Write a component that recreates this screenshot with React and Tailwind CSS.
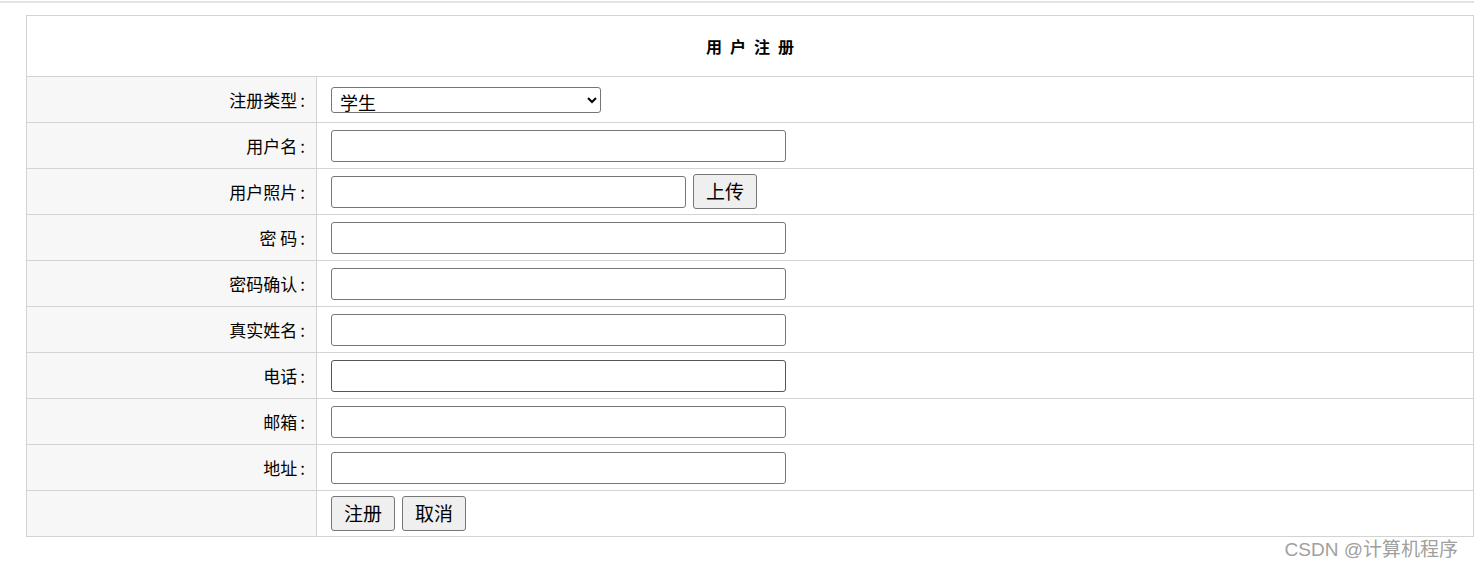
import { useState } from 'react';

const fields = [
  { label: '用户名', name: 'username' },
  { label: '用户照片', name: 'photo', upload: true },
  { label: '密 码', name: 'password', type: 'password' },
  { label: '密码确认', name: 'password2', type: 'password' },
  { label: '真实姓名', name: 'realname' },
  { label: '电话', name: 'phone', dark: true },
  { label: '邮箱', name: 'email' },
  { label: '地址', name: 'address' }
];

const font = { fontFamily: '"Noto Sans CJK SC", "Noto Sans", sans-serif' };

const Label = ({ text, top }) => (
  <div className={`flex items-center justify-end bg-[#f7f7f7] border-r ${top ? 'border-t' : ''} border-[#d3d3d3] pr-[11px] text-[17px] text-black`}>
    {text}
    <span className="ml-[3px]">:</span>
  </div>
);

const App = () => {
  const [type, setType] = useState('学生');

  return (
    <div className="relative w-[1474px] h-[569px] bg-white" style={font}>
      <div className="h-[3px] bg-[#e4e4e4] border-t border-white" />

      <div className="mt-[12px] ml-[26px] w-[1448px] border border-[#d3d3d3]">
        {/* Title */}
        <div className="h-[61px] flex items-center justify-center border-b border-[#d3d3d3]">
          <span className="text-[16px] font-bold tracking-[0.5em] text-black pl-[0.5em]">用户注册</span>
        </div>

        <div className="grid grid-cols-[290px_1fr]">
          {/* Register type */}
          <Label text="注册类型" />
          <div className="h-[45px] flex items-center pl-[14px]">
            <select
              value={type}
              onChange={(e) => setType(e.target.value)}
              className="w-[270px] h-[26px] border border-[#767676] rounded-[3px] pl-[4px] text-[18px] leading-none bg-white text-black"
            >
              <option>学生</option>
              <option>教师</option>
            </select>
          </div>

          {fields.map((f) => (
            <Row key={f.name} field={f} />
          ))}

          {/* Actions */}
          <div className="bg-[#f7f7f7] border-r border-t border-[#d3d3d3]" />
          <div className="h-[46px] flex items-center gap-[7px] pl-[14px] border-t border-[#d3d3d3]">
            <button className="w-[64px] h-[35px] border border-[#767676] rounded-[3px] bg-[#efefef] text-[19px] text-black">注册</button>
            <button className="w-[64px] h-[35px] border border-[#767676] rounded-[3px] bg-[#efefef] text-[19px] text-black">取消</button>
          </div>
        </div>
      </div>

      <div className="absolute right-[16px] top-[536px] text-[19px] text-[#a0a0a0]" style={{ fontFamily: '"Liberation Sans", "Noto Sans CJK SC", sans-serif' }}>
        CSDN @计算机程序
      </div>
    </div>
  );
};

const Row = ({ field }) => (
  <>
    <Label text={field.label} top />
    <div className="h-[46px] flex items-center gap-[7px] pl-[14px] border-t border-[#d3d3d3]">
      <input
        type={field.type || 'text'}
        className={`${field.upload ? 'w-[355px]' : 'w-[455px]'} h-[32px] border ${field.dark ? 'border-[#555]' : 'border-[#767676]'} rounded-[3px] bg-white px-[4px] text-[16px]`}
      />
      {field.upload && (
        <button className="w-[64px] h-[35px] border border-[#767676] rounded-[3px] bg-[#efefef] text-[19px] text-black">上传</button>
      )}
    </div>
  </>
);

export default App;
